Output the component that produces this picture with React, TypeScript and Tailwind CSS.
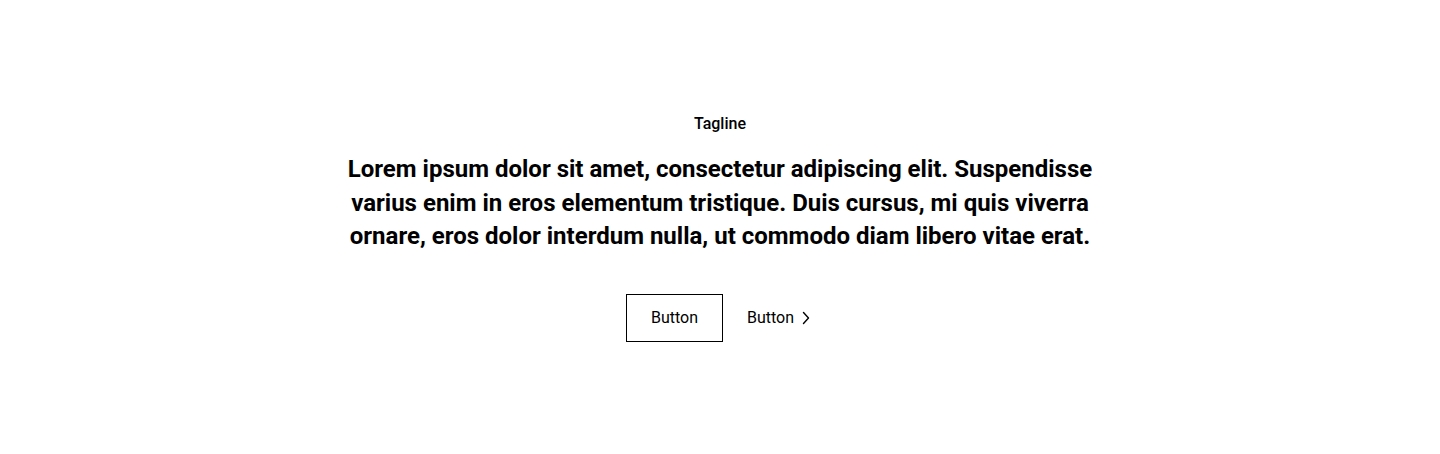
import React from "react";

export default function App() {
  return (
    <section
      className="bg-white px-[5%] py-28 text-black"
      style={{ fontFamily: "Roboto, 'Liberation Sans', sans-serif" }}
    >
      <div className="mx-auto flex max-w-3xl flex-col items-center text-center">
        <p className="mb-[17px] text-base font-medium leading-6">Tagline</p>
        <h2 className="text-2xl font-bold leading-[1.4]">
          Lorem ipsum dolor sit amet, consectetur adipiscing elit. Suspendisse
          varius enim in eros elementum tristique. Duis cursus, mi quis viverra
          ornare, eros dolor interdum nulla, ut commodo diam libero vitae erat.
        </h2>
        <div className="mt-[40px] flex items-center gap-6">
          <button className="border border-black px-6 py-[11px] text-base leading-6">
            Button
          </button>
          <button className="flex items-center gap-1 text-base leading-6">
            Button
            <svg
              width="16"
              height="16"
              viewBox="0 0 16 16"
              fill="none"
              stroke="currentColor"
              strokeWidth="1.4"
              strokeLinecap="round"
              strokeLinejoin="round"
            >
              <path d="M5.5 2.5 L10.5 8 L5.5 13.5" />
            </svg>
          </button>
        </div>
      </div>
    </section>
  );
}
